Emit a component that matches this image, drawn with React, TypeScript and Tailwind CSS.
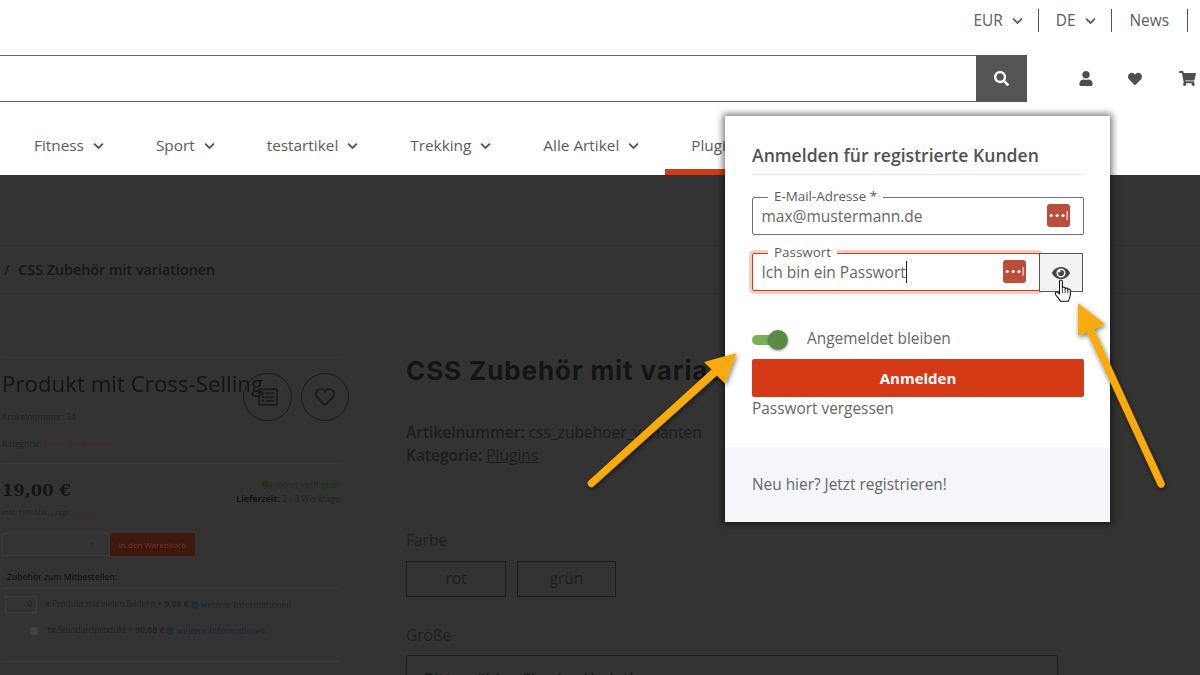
import React from "react";
import {
  FaUser, FaHeart, FaShoppingCart, FaSearch, FaEye, FaTruck, FaInfoCircle, FaRegHeart, FaRegListAlt,
} from "react-icons/fa";

function Chevron({ className }: { className?: string }) {
  return (
    <svg viewBox="0 0 12 8" className={className} fill="none" stroke="currentColor" strokeWidth="2">
      <path d="M1.2 1.5 6 6.2l4.8-4.7" />
    </svg>
  );
}

function PassIcon() {
  return (
    <svg viewBox="0 0 23 23" className="w-[23px] h-[23px] shrink-0">
      <rect width="23" height="23" rx="3" fill="#bb4d3b" />
      <circle cx="4.2" cy="11.5" r="1.6" fill="#fff" />
      <circle cx="10.2" cy="11.5" r="1.6" fill="#fff" />
      <circle cx="16" cy="11.5" r="1.6" fill="#fff" />
      <rect x="19.6" y="7" width="1" height="9" fill="#fff" />
    </svg>
  );
}

function NavItem({ label, active, chevron = true }: { label: string; active?: boolean; chevron?: boolean }) {
  return (
    <div className={`flex items-center gap-[9px] px-[26px] ${active ? "border-b-[6px] border-[#d53a17] pt-[20px]" : "pt-[14px]"}`}>
      <span>{label}</span>
      {chevron && <Chevron className="w-[11px] h-[8px] text-[#555]" />}
    </div>
  );
}

function Arrows() {
  return (
    <svg className="absolute left-0 top-0 w-[1200px] h-[675px] pointer-events-none" viewBox="0 0 1200 675">
      <defs>
        <filter id="sh" x="-20%" y="-20%" width="140%" height="140%">
          <feDropShadow dx="1" dy="2" stdDeviation="2.5" floodColor="#000" floodOpacity="0.55" />
        </filter>
      </defs>
      <g filter="url(#sh)" fill="#f9ab07" stroke="none">
        <path d="M736.5 353 704 362 711.5 369.5 589 480.5a3.6 3.6 0 0 0 -.3 5.2 3.6 3.6 0 0 0 5.2.3L717 375.5 725 383.5Z" />
        <path d="M1078 303 1105 324 1094 329 1164.5 482.5a3.6 3.6 0 0 1 -1.8 4.9 3.6 3.6 0 0 1 -4.9-1.8L1087 332 1078 336Z" />
      </g>
    </svg>
  );
}

function HandCursor() {
  return (
    <svg viewBox="0 0 15 22" preserveAspectRatio="none" className="absolute left-[1054px] top-[279px] w-[18px] h-[24px]">
      <path
        d="M4.6 2.2c0-1.6 2.4-1.6 2.4 0v6.2c0-1.3 2.3-1.3 2.3 0v.8c0-1.2 2.2-1.2 2.2 0v.8c0-1.1 2.1-1.1 2.1.2v4.3c0 2.6-1.2 3.6-1.6 6H5.3c-.5-1.7-2.2-3.4-3.6-5.6-.9-1.4-.8-2.6.2-2.9.8-.2 1.8.5 2.7 1.8Z"
        fill="#fff" stroke="#111" strokeWidth="0.9" strokeLinejoin="round"
      />
      <path d="M7 9v4M9.3 9v4M11.5 10v3" stroke="#111" strokeWidth="0.7" fill="none" />
    </svg>
  );
}

function LoginPopover() {
  return (
    <div className="absolute left-[725px] top-[116px] w-[385px] h-[406px] bg-white shadow-[0_0_7px_2px_rgba(0,0,0,0.55)] flex flex-col text-[#5c5c5c]">
      <div className="flex-1 pl-[27px] pr-[26px] pt-[27px]">
        <h2 className="text-[17.6px] leading-[25px] font-semibold text-[#525252] pb-[6px] border-b border-[#e8e8e8]">
          Anmelden für registrierte Kunden
        </h2>
        <fieldset className="mt-[15px] h-[45px] border border-[#707070] rounded-[2px] pl-[15px] pr-[3px] flex flex-col">
          <legend className="px-[6px] text-[13.4px] leading-[14px] text-[#5c5c5c]">
            <span className="block -translate-y-[1px]">E-Mail-Adresse <span className="text-[#8a4b2c]">*</span></span>
          </legend>
          <div className="flex items-center justify-between -ml-[6.5px] pr-[10px]">
            <span className="text-[15.5px] leading-[22px] text-[#666]">max@mustermann.de</span>
            <PassIcon />
          </div>
        </fieldset>
        <div className="mt-[11px] flex">
          <fieldset className="w-[288px] h-[45px] border border-[#d53a17] rounded-[2px] pl-[15px] flex flex-col shadow-[0_0_0_3px_#f6cfc6]">
            <legend className="px-[6px] text-[13.4px] leading-[14px] bg-white text-[#5c5c5c]">
              <span className="block -translate-y-[1px]">Passwort</span>
            </legend>
            <div className="flex items-center justify-between -ml-[6.5px] pr-[13px]">
              <span className="text-[15.5px] leading-[22px] text-[#666] border-r border-[#222]">Ich bin ein Passwort</span>
              <PassIcon />
            </div>
          </fieldset>
          <div className="w-[44px] h-[39px] mt-[7px] -ml-[1px] border border-[#555] bg-[#f3f3f3] flex items-center justify-center">
            <FaEye className="w-[18px] h-[18px] text-[#474747]" />
          </div>
        </div>
        <div className="mt-[37px] flex items-center h-[22px]">
          <div className="w-[30px] h-[10px] rounded-full bg-[#79b254] flex items-center justify-end">
            <div className="w-[20px] h-[20px] rounded-full bg-[#5a8b45] shadow-[0_1px_3px_rgba(0,0,0,0.4)] -mr-[6px] shrink-0" />
          </div>
          <span className="ml-[25px] -mt-[3px] text-[15.4px] text-[#666]">Angemeldet bleiben</span>
        </div>
        <button className="mt-[8px] w-[332px] h-[38px] rounded-[2px] bg-[#d53a17] text-white font-bold text-[15px] block">
          Anmelden
        </button>
        <div className="mt-[1px] text-[15.4px] leading-[22px] text-[#666]">Passwort vergessen</div>
      </div>
      <div className="h-[75px] bg-[#f4f6fa] px-[27px] flex items-center text-[15.4px] text-[#666]">
        Neu hier? Jetzt registrieren!
      </div>
    </div>
  );
}

function ProductLeft() {
  return (
    <div className="relative w-[338px] ml-[2px] shrink-0 text-[#1f1f1f] blur-[0.35px]">
      <div className="border-t border-dotted border-[#3d3d3d] -ml-[2px]" />
      <h3 className="mt-[11px] text-[22.3px] leading-[30px] text-[#141414] whitespace-nowrap">Produkt mit Cross-Selling</h3>
      <div className="mt-[12px] text-[8.5px] leading-[12px] text-[#222]">Artikelnummer: 34</div>
      <div className="mt-[15px] text-[8.5px] leading-[12px] text-[#222]">
        Kategorie: <span className="text-[#432826]">Grundfunktionen</span>
      </div>
      <div className="mt-[13px] border-t border-[#3a3a3a]" />
      <div className="mt-[12px] flex justify-between items-start">
        <div>
          <div className="text-[16.5px] leading-[26px] font-bold text-[#141414] mt-[2px]" style={{ fontFamily: "'DejaVu Serif', serif" }}>
            19,00 €
          </div>
          <div className="text-[7.5px] leading-[12px] mt-[2px] text-[#222]">
            inkl. 19% USt. , zzgl. <span className="text-[#432826]">Versand</span>
          </div>
        </div>
        <div className="text-right text-[8.7px] leading-[14px] mt-[2px]">
          <div className="flex items-center justify-end gap-[2px] text-[#1d3318]">
            <FaTruck className="w-[10px] h-[10px]" /> sofort verfügbar
          </div>
          <div className="text-[#222]"><b className="text-[#141414]">Lieferzeit:</b> 2 - 3 Werktage</div>
        </div>
      </div>
      <div className="mt-[15px] flex h-[23px] text-[8px]">
        <div className="w-[108px] border border-[#3d3d3d] rounded-l-[2px] flex items-center justify-end pr-[15px] text-[#222]">1</div>
        <div className="w-[85px] bg-[#3e170e] text-[#76392b] flex items-center justify-center rounded-r-[2px]">In den Warenkorb</div>
      </div>
      <div className="mt-[15px] ml-[5px] text-[8.5px] leading-[12px] font-semibold text-[#141414]">Zubehör zum Mitbestellen:</div>
      <div className="mt-[5px] border-t border-[#3a3a3a]" />
      <div className="mt-[7px] flex items-center h-[17px] text-[8.5px] whitespace-nowrap text-[#222]">
        <div className="ml-[3px] w-[32px] h-[17px] border border-[#3d3d3d] flex items-center justify-end pr-[4px]">0</div>
        <span className="ml-[8px]"><b>x</b> Produkt mit vielen Bildern + <b>9,99 €</b></span>
        <FaInfoCircle className="mx-[2px] w-[8px] h-[8px] text-[#1d2c3a]" />
        <span className="text-[10.2px] text-[#1e2630]" style={{ fontFamily: "'Liberation Serif', serif" }}>weitere Informationen</span>
      </div>
      <div className="mt-[9px] flex items-center h-[17px] text-[8.5px] whitespace-nowrap text-[#222]">
        <div className="ml-[28px] w-[8px] h-[8px] bg-[#444] border border-[#3d3d3d] rounded-[1px]" />
        <span className="ml-[8px]"><b>1x</b> Standardprodukt + <b>50,00 €</b></span>
        <FaInfoCircle className="mx-[2px] w-[8px] h-[8px] text-[#1d2c3a]" />
        <span className="text-[10.2px] text-[#1e2630]" style={{ fontFamily: "'Liberation Serif', serif" }}>weitere Informationen</span>
      </div>
      <div className="mt-[22px] border-t border-[#3a3a3a]" />
      <div className="absolute left-[241px] top-[16px] w-[49px] h-[48px] rounded-full border border-[#1c1c1c] flex items-center justify-center">
        <FaRegListAlt className="w-[20px] h-[20px] text-[#1c1c1c]" />
      </div>
      <div className="absolute left-[299px] top-[16px] w-[48px] h-[48px] rounded-full border border-[#1c1c1c] flex items-center justify-center">
        <FaRegHeart className="w-[20px] h-[20px] text-[#1c1c1c]" />
      </div>
    </div>
  );
}

function ProductRight() {
  return (
    <div className="ml-[66px] w-[652px] shrink-0 pt-[1px] text-[#1c1c1c]">
      <h1 className="text-[26px] leading-[26px] font-bold text-[#141414] whitespace-nowrap tracking-[0.9px]" style={{ fontFamily: "'Inter', sans-serif" }}>
        CSS Zubehör mit variationen
      </h1>
      <div className="mt-[37px] text-[15.5px] leading-[23px]">
        <div><b className="font-semibold">Artikelnummer:</b> css_zubehoer_varianten</div>
        <div><b className="font-semibold">Kategorie:</b> <span className="underline">Plugins</span></div>
      </div>
      <div className="mt-[61px] text-[15.5px] leading-[24px] text-[#1f1f1f]">Farbe</div>
      <div className="mt-[9px] flex gap-[11px] text-[15.5px] text-[#1f1f1f]">
        <div className="w-[100px] h-[36px] border border-[#1c1c1c] flex items-center justify-center">rot</div>
        <div className="w-[99px] h-[36px] border border-[#1c1c1c] flex items-center justify-center">grün</div>
      </div>
      <div className="mt-[26px] text-[15.5px] leading-[24px] text-[#1f1f1f]">Größe</div>
      <div className="mt-[8px] h-[40px] border border-[#1c1c1c] rounded-[2px] pl-[17px] pt-[12px] text-[15.5px] font-semibold whitespace-nowrap">
        Bitte wählen Sie eine Variation
      </div>
    </div>
  );
}

export default function App() {
  return (
    <div className="relative w-[1200px] h-[675px] overflow-hidden bg-white flex flex-col" style={{ fontFamily: "'Open Sans', sans-serif" }}>
      <div className="h-[55px] shrink-0 flex justify-end items-start pt-[9px] pr-[12px] text-[15.4px] text-[#5c5c5c]">
        <div className="h-[23px] flex items-center pr-[15px] gap-[9px] border-r border-[#555]">
          EUR <Chevron className="w-[11px] h-[8px]" />
        </div>
        <div className="h-[23px] flex items-center pl-[17px] pr-[15px] gap-[9px] border-r border-[#555]">
          DE <Chevron className="w-[11px] h-[8px]" />
        </div>
        <div className="h-[23px] flex items-center px-[18px] border-r border-[#555]">News</div>
      </div>
      <div className="h-[47px] shrink-0 flex items-stretch text-[#4f4f4f]">
        <div className="w-[976px] border-y border-[#666]" />
        <div className="w-[51px] bg-[#555] flex items-center justify-center">
          <FaSearch className="w-[15px] h-[15px] text-white" />
        </div>
        <div className="flex-1 flex items-center pl-[52px] gap-[34px]">
          <FaUser className="w-[14px] h-[15px]" />
          <FaHeart className="w-[16px] h-[14px]" />
          <FaShoppingCart className="w-[17px] h-[15px] ml-[2px] shrink-0" />
        </div>
      </div>
      <div className="h-[73px] shrink-0 flex items-stretch pl-[8px] text-[15.35px] text-[#5c5c5c]">
        <NavItem label="Fitness" />
        <NavItem label="Sport" />
        <NavItem label="testartikel" />
        <NavItem label="Trekking" />
        <NavItem label="Alle Artikel" />
        <NavItem label="Plugins" active chevron={false} />
      </div>
      <div className="flex-1 bg-[#333] overflow-hidden">
        <div className="mt-[70px] h-[49px] border-y border-[#2f2f2f] flex items-center pl-[4px] text-[14.3px] text-[#161616] gap-[9px]">
          <span>/</span>
          <span className="font-semibold">CSS Zubehör mit variationen</span>
        </div>
        <div className="mt-[63px] flex items-start">
          <ProductLeft />
          <ProductRight />
        </div>
      </div>
      <LoginPopover />
      <HandCursor />
      <Arrows />
    </div>
  );
}
